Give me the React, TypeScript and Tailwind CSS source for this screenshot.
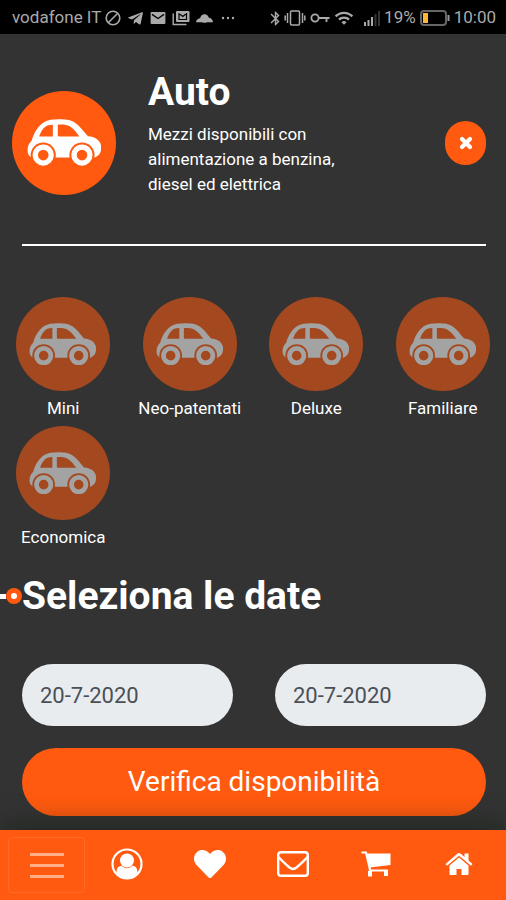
import React from 'react';
import { FaTelegramPlane, FaHeart } from 'react-icons/fa';
import { MdBluetooth, MdWifi } from 'react-icons/md';

const CATEGORIES = ['Mini', 'Neo-patentati', 'Deluxe', 'Familiare', 'Economica'];

const CarIcon: React.FC = () => (
  <svg viewBox="0 0 226 142" className="w-[72%]" aria-hidden="true">
    <path
      fill="#fff"
      fillRule="evenodd"
      d="M12 115C4 110 1 102 2 92C2 82 6 74 14 66C20 44 32 22 51 10C63 3 78 1 96 1C118 1 132 3 145 11C160 21 169 35 184 52C205 54 218 62 223 77C226 96 222 109 205 116L12 116ZM37 53H78V17C65 17 57 20 50 28C43 36 39 45 37 53ZM93 17V50L96 53H158C149 40 141 30 130 23C121 17 107 16 93 17Z"
    />
    <circle cx="49" cy="109" r="38" fill="#ff5a0f" />
    <circle cx="166" cy="109" r="38" fill="#ff5a0f" />
    <circle cx="49" cy="109" r="24" fill="none" stroke="#fff" strokeWidth="16" />
    <circle cx="166" cy="109" r="24" fill="none" stroke="#fff" strokeWidth="16" />
  </svg>
);

const StatusBar: React.FC = () => (
  <div className="flex h-[34px] items-center justify-between bg-black pt-0.5 pr-2.5 pl-3 text-[17px] text-[#aaa]">
    <div className="flex items-center gap-1">
      <span>vodafone IT</span>
      <svg viewBox="0 0 16 16" className="size-4" fill="none" stroke="currentColor" strokeWidth="1.6">
        <circle cx="8" cy="8" r="6.8" />
        <path d="M3.500 12.500l9-9" />
      </svg>
      <FaTelegramPlane className="ml-0.5 size-[17px]" />
      <svg viewBox="0 0 16 13" className="mx-0.5 h-3 w-4">
        <rect width="16" height="13" rx="1" fill="currentColor" />
        <path d="M1.500 2.500L8 7l6.500-4.500" fill="none" stroke="#000" strokeWidth="1.500" />
      </svg>
      <svg viewBox="0 0 18 16" className="h-4 w-[18px]">
        <path d="M1.200 3.500V14.500H14.500" fill="none" stroke="currentColor" strokeWidth="1.400" />
        <rect x="4" y="1" width="13.500" height="11" rx="1" fill="currentColor" />
        <path d="M7 3V9.500H14.500V3M7 3.500L10.800 6.500L14.500 3.500" fill="none" stroke="#000" strokeWidth="1.200" />
      </svg>
      <svg viewBox="0 0 18 10" className="ml-0.5 h-2.5 w-[17px]" fill="currentColor">
        <circle cx="9" cy="5.500" r="4.500" />
        <path d="M0 9.500C0 7 2 5.500 5 5L13 4.500C16 5 18 7 18 9.500Z" />
      </svg>
      <svg viewBox="0 0 14 4" className="ml-1 h-1 w-3.5" fill="currentColor">
        <circle cx="2" cy="2" r="1.200" />
        <circle cx="7" cy="2" r="1.200" />
        <circle cx="12" cy="2" r="1.200" />
      </svg>
    </div>
    <div className="flex items-center">
      <MdBluetooth className="size-[17px]" />
      <svg viewBox="0 0 22 16" className="h-4 w-[22px]" fill="none" stroke="currentColor" strokeWidth="1.500">
        <rect x="6.500" y="1" width="9" height="14" rx="1" />
        <path d="M3.500 3V13M18.500 3V13M1.200 5.500V10.500M20.800 5.500V10.500" />
      </svg>
      <svg viewBox="0 0 20 12" className="ml-1 h-3 w-5" fill="none" stroke="currentColor" strokeWidth="1.800">
        <circle cx="5" cy="6" r="3.600" />
        <path d="M8.500 6H19.500M16.500 6V10" />
      </svg>
      <MdWifi className="ml-1 size-5" />
      <svg viewBox="0 0 16 16" className="ml-2.5 size-4" fill="currentColor">
        <path d="M0 12h2v4H0zM3.500 10h2v6h-2zM7 7h2v9H7z" />
        <path d="M10.500 4h2v12h-2zM14 1h2v15h-2z" opacity=".3" />
      </svg>
      <span className="ml-1">19%</span>
      <svg viewBox="0 0 30 16" className="ml-1 h-4 w-[30px]">
        <rect x="1" y="1" width="25" height="14" rx="3" fill="none" stroke="#666" strokeWidth="2" />
        <rect x="3" y="3" width="5" height="10" fill="#fdb833" />
        <path d="M28.500 5V11" stroke="#999" strokeWidth="2" />
      </svg>
      <span className="ml-1">10:00</span>
    </div>
  </div>
);

const UserIcon: React.FC = () => (
  <svg viewBox="0 0 32 32" className="size-8" aria-hidden="true">
    <circle cx="16" cy="16" r="14.500" fill="none" stroke="currentColor" strokeWidth="2.200" />
    <circle cx="16" cy="12.500" r="7" fill="currentColor" />
    <path fill="currentColor" d="M5.500 25C5.500 20 7.500 18 10.500 17.800C13.500 21 18.500 21 21.500 17.800C24.500 18 26.500 20 26.500 25C23 28.500 20 30.500 16 30.500C12 30.500 9 28.500 5.500 25Z" />
  </svg>
);

const MailIcon: React.FC = () => (
  <svg viewBox="0 0 32 26" className="h-[26px] w-8" fill="none" stroke="currentColor" strokeWidth="2.400" aria-hidden="true">
    <rect x="1.200" y="1.200" width="29.600" height="23.600" rx="2.800" />
    <path d="M1.500 6C5 10 9 13.500 12.500 16.500C15 18.500 17 18.500 19.500 16.500C23 13.500 27 10 30.500 6" />
  </svg>
);

const CartIcon: React.FC = () => (
  <svg viewBox="0 0 30 26" className="h-[26px] w-[30px]" aria-hidden="true">
    <path d="M.5 1.500H5L9 18.500V24" fill="none" stroke="currentColor" strokeWidth="2.200" />
    <path fill="currentColor" d="M5.500 2.500H29.500V14L8.500 16.500Z" />
    <path d="M8 19.500H27" stroke="currentColor" strokeWidth="2" />
    <path fill="currentColor" d="M7 20H11V25.500H7ZM23 19H27V25H23Z" />
  </svg>
);

const HomeIcon: React.FC = () => (
  <svg viewBox="0 0 28 24" className="h-6 w-7" aria-hidden="true">
    <path fill="currentColor" d="M14 5.500L23.500 13.500V22C23.500 22.700 23 23 22.500 23H16.500V17H11.500V23H5.500C4.900 23 4.500 22.600 4.500 22V13.500Z" />
    <path fill="currentColor" d="M.5 12L12.500 1.500C13.500 .7 14.500 .7 15.500 1.500L19.500 5V1.500H23.500V8.500L27.500 12L26 13.700L14 3.700L2 13.700Z" />
  </svg>
);

const NAV_ITEMS = [
  { label: 'Profilo', icon: <UserIcon /> },
  { label: 'Preferiti', icon: <FaHeart className="size-8" /> },
  { label: 'Messaggi', icon: <MailIcon /> },
  { label: 'Carrello', icon: <CartIcon /> },
  { label: 'Home', icon: <HomeIcon /> },
];

const BottomNav: React.FC = () => (
  <nav className="sticky bottom-0 mt-auto flex h-[70px] items-center bg-[#ff5a0f] pr-1.5 pl-2 text-white shadow-[0_-4px_28px_rgba(20,30,20,0.6)]">
    <button
      type="button"
      aria-label="Menu"
      className="flex h-14 w-[77px] flex-col items-center justify-center gap-2 rounded border border-white/10"
    >
      <span className="h-[3px] w-[34px] bg-white/50" />
      <span className="h-[3px] w-[34px] bg-white/50" />
      <span className="h-[3px] w-[34px] bg-white/50" />
    </button>
    {NAV_ITEMS.map(({ label, icon }) => (
      <a key={label} href="#" aria-label={label} className="flex flex-1 justify-center pb-0.5">
        {icon}
      </a>
    ))}
  </nav>
);

const App: React.FC = () => {
  return (
    <div className="flex min-h-screen flex-col bg-[#333] font-['Roboto',sans-serif] text-white">
      <StatusBar />

      <main className="pb-3.5">
        <header className="flex items-center pt-[34px] pr-5 pl-3">
          <div className="flex size-[104px] shrink-0 items-center justify-center rounded-full bg-[#ff5a0f]">
            <CarIcon />
          </div>
          <div className="ml-8 pb-5">
            <h1 className="text-[39px] leading-[48px] font-bold">Auto</h1>
            <p className="mt-1.5 max-w-[210px] text-[17px] leading-[25px]">
              Mezzi disponibili con alimentazione a benzina, diesel ed elettrica
            </p>
          </div>
          <button
            type="button"
            aria-label="Chiudi"
            className="ml-auto flex h-11 w-[41px] shrink-0 items-center justify-center rounded-full bg-[#ff5a0f]"
          >
            <svg viewBox="0 0 14 14" className="size-3.5" stroke="currentColor" strokeWidth="4.200" strokeLinecap="round">
              <path d="M3 3l8 8M11 3l-8 8" />
            </svg>
          </button>
        </header>

        <hr className="mt-[27px] mr-5 ml-[22px] border-t-2 border-white" />

        <section className="mt-[51px] grid grid-cols-4 gap-y-1.5">
          {CATEGORIES.map((name) => (
            <button key={name} type="button" className="flex flex-col items-center">
              <span className="flex size-[94px] items-center justify-center rounded-full bg-[#ff5a0f] opacity-55">
                <CarIcon />
              </span>
              <span className="mt-[5px] text-[17px] leading-6">{name}</span>
            </button>
          ))}
        </section>

        <form onSubmit={(e) => e.preventDefault()}>
          <div className="mt-[23px] flex items-center">
            {/* Timeline marker */}
            <span className="h-[5px] w-1.5 bg-white" />
            <span className="flex size-4 items-center justify-center rounded-full bg-[#ff5a0f]">
              <span className="size-1.5 rounded-full bg-white" />
            </span>
            <h2 className="text-[39px] leading-[48px] font-bold">Seleziona le date</h2>
          </div>

          <div className="mt-11 grid grid-cols-2 gap-[42px] pr-5 pl-[22px]">
            <input
              type="text"
              aria-label="Data inizio"
              defaultValue="20-7-2020"
              className="h-[62px] w-full min-w-0 rounded-full bg-[#e9ecef] px-[18px] text-[22px] text-[#495057]"
            />
            <input
              type="text"
              aria-label="Data fine"
              defaultValue="20-7-2020"
              className="h-[62px] w-full min-w-0 rounded-full bg-[#e9ecef] px-[18px] text-[22px] text-[#495057]"
            />
          </div>

          <div className="mt-[22px] pr-5 pl-[22px]">
            <button type="submit" className="h-[68px] w-full rounded-full bg-[#ff5a0f] text-[28px]">
              Verifica disponibilità
            </button>
          </div>
        </form>
      </main>

      <BottomNav />
    </div>
  );
};

export default App;
